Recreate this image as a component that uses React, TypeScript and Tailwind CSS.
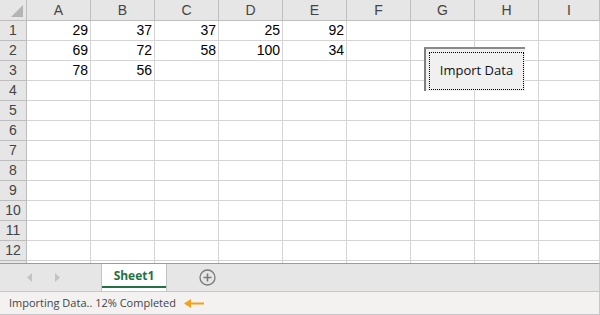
import React from "react";

const cols = ["A", "B", "C", "D", "E", "F", "G", "H", "I"];

const data: Record<number, (number | null)[]> = {
  1: [29, 37, 37, 25, 92],
  2: [69, 72, 58, 100, 34],
  3: [78, 56],
};

// row 13 only peeks out under the tab bar, so it has no label
const rows = Array.from({ length: 13 }, (_, i) => i + 1);

function ImportButton() {
  return (
    <div className="absolute left-[424px] top-[47px] h-[44px] w-[101px] border-l-2 border-t-2 border-l-[#7f7f7f] border-t-[#8a8a8a] bg-[#f0f0f0] p-[3px] pr-[1px] pb-[1px]">
      <div className="flex h-full w-full items-center justify-center border border-dotted border-black font-['Segoe_UI','Open_Sans',sans-serif] text-[13px] text-[#111]">
        Import Data
      </div>
    </div>
  );
}

export default function App() {
  return (
    <div className="flex h-[315px] w-[600px] flex-col overflow-hidden bg-white font-['Liberation_Sans',Arial,sans-serif]">
      <div className="relative h-[263px] overflow-hidden">
        <div className="grid grid-cols-[27px_repeat(8,64px)_1fr]">
          <div className="relative h-[21px] border-b border-r border-[#bdbdbd] bg-[#e6e6e6]">
            <svg className="absolute bottom-[3px] right-[3px]" width="12" height="12" viewBox="0 0 12 12">
              <polygon points="12,0 12,12 0,12" fill="#b4b4b4" />
            </svg>
          </div>
          {cols.map((c) => (
            <div
              key={c}
              className="flex h-[21px] items-center justify-center border-b border-r border-[#bdbdbd] bg-[#e6e6e6] text-[14px] text-[#444]"
            >
              {c}
            </div>
          ))}

          {rows.map((r) => (
            <React.Fragment key={r}>
              <div className="flex h-[20px] items-center justify-center border-b border-r border-[#bdbdbd] bg-[#e6e6e6] text-[14px] text-[#444]">
                {r < 13 ? r : ""}
              </div>
              {cols.map((c, ci) => {
                const v = data[r]?.[ci];
                return (
                  <div
                    key={c}
                    className="flex h-[20px] items-center justify-end border-b border-r border-[#d4d4d4] pr-[2px] text-[14px] text-black"
                  >
                    {v ?? ""}
                  </div>
                );
              })}
            </React.Fragment>
          ))}
        </div>
        <ImportButton />
      </div>

      {/* sheet tabs */}
      <div className="flex h-[29px] items-stretch border-b border-r border-t-[1px] border-b-[#c8c8c8] border-r-[#c8c8c8] border-t-[#9b9b9b] bg-[#e6e6e6]">
        <div className="flex w-[101px] items-center gap-[22px] pl-[27px]">
          <svg width="6" height="9" viewBox="0 0 6 9">
            <polygon points="5,0 5,9 0,4.5" fill="#c3c3c3" />
          </svg>
          <svg width="6" height="9" viewBox="0 0 6 9">
            <polygon points="0,0 0,9 5,4.5" fill="#c3c3c3" />
          </svg>
        </div>
        <div className="flex w-[66px] flex-col border-x border-[#c3c3c3] bg-white">
          <div className="flex flex-1 items-center justify-center pt-[1px] font-['Segoe_UI','Open_Sans',sans-serif] text-[12px] font-bold text-[#217346]">
            Sheet1
          </div>
          <div className="mb-[3px] h-[2px] bg-[#217346]" />
        </div>
        <div className="flex items-center pl-[32px]">
          <svg width="17" height="17" viewBox="0 0 17 17">
            <circle cx="8.5" cy="8.5" r="7.5" fill="none" stroke="#7a7a7a" strokeWidth="1.3" />
            <path d="M8.5 4.5v8M4.5 8.5h8" stroke="#7a7a7a" strokeWidth="1.6" />
          </svg>
        </div>
      </div>

      {/* status bar */}
      <div className="flex flex-1 items-center gap-[8px] border-b border-r border-[#c8c8c8] bg-[#f3f2f1] pl-[9px] font-['Segoe_UI','Open_Sans',sans-serif] text-[11px] text-[#444]">
        <span>Importing Data.. 12% Completed</span>
        <svg width="20" height="9" viewBox="0 0 20 9">
          <path d="M2 4.5h18" stroke="#f5a01a" strokeWidth="2" />
          <polygon points="0,4.5 7,0 7,9" fill="#f5a01a" />
        </svg>
      </div>
    </div>
  );
}
